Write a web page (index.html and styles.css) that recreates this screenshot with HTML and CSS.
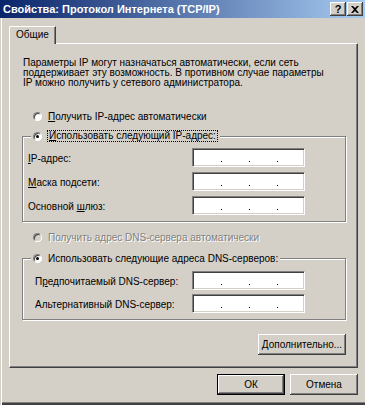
FILE: index.html
```html
<!DOCTYPE html>
<html lang="ru">
<head>
    <meta charset="UTF-8">
    <title>Свойства: Протокол Интернета (TCP/IP)</title>
    <link rel="stylesheet" href="styles.css">
</head>
<body>
    <div class="window">
        <!-- Title bar -->
        <div class="titlebar">
            <span class="title">Свойства: Протокол Интернета (TCP/IP)</span>
            <div class="caption-buttons">
                <span class="cap">?</span>
                <span class="cap">
                    <svg width="8" height="7" viewBox="0 0 8 7"><path d="M0 0h2l2 2 2-2h2L5 3.5 8 7H6L4 5 2 7H0l3-3.5z" fill="#000"/></svg>
                </span>
            </div>
        </div>

        <div class="client">
            <div class="tab-strip">
                <div class="tab">Общие</div>
            </div>

            <div class="panel">
                <p class="intro">Параметры IP могут назначаться автоматически, если сеть поддерживает эту возможность. В противном случае параметры IP можно получить у сетевого администратора.</p>

                <div class="radio radio-top">
                    <span class="radio-box"></span>
                    <span class="radio-text"><u>П</u>олучить IP-адрес автоматически</span>
                </div>

                <div class="group group-ip">
                    <div class="group-head">
                        <div class="radio">
                            <span class="radio-box checked"></span>
                            <span class="radio-text focus"><u>И</u>спользовать следующий IP-адрес:</span>
                        </div>
                    </div>
                    <div class="fields fields-ip">
                        <div class="field">
                            <span class="field-label"><u>I</u>P-адрес:</span>
                            <div class="ip"><i></i><i></i><i></i></div>
                        </div>
                        <div class="field">
                            <span class="field-label"><u>М</u>аска подсети:</span>
                            <div class="ip"><i></i><i></i><i></i></div>
                        </div>
                        <div class="field">
                            <span class="field-label">Основной <u>ш</u>люз:</span>
                            <div class="ip"><i></i><i></i><i></i></div>
                        </div>
                    </div>
                </div>

                <div class="radio radio-dns disabled">
                    <span class="radio-box"></span>
                    <span class="radio-text">Получить адрес DNS-сервера автоматически</span>
                </div>

                <div class="group group-dns">
                    <div class="group-head">
                        <div class="radio">
                            <span class="radio-box checked"></span>
                            <span class="radio-text">Использовать следующие адреса DNS-серверов:</span>
                        </div>
                    </div>
                    <div class="fields fields-dns">
                        <div class="field">
                            <span class="field-label">П<u>р</u>едпочитаемый DNS-сервер:</span>
                            <div class="ip"><i></i><i></i><i></i></div>
                        </div>
                        <div class="field">
                            <span class="field-label">Альтернативный DNS-сервер:</span>
                            <div class="ip"><i></i><i></i><i></i></div>
                        </div>
                    </div>
                </div>

                <div class="advanced-row">
                    <button class="btn btn-advanced"><u>Д</u>ополнительно...</button>
                </div>
            </div>

            <div class="dialog-buttons">
                <button class="btn default">ОК</button>
                <button class="btn">Отмена</button>
            </div>
        </div>
    </div>
</body>
</html>
```

FILE: styles.css
```css
/* General */
body {
    margin: 0;
    font-family: "Liberation Sans", Arial, sans-serif;
    font-size: 10px;
    color: #000;
    background-color: #d4d0c8;
}

.window {
    width: 365px;
    height: 405px;
    box-sizing: border-box;
    background-color: #d4d0c8;
    box-shadow: inset 1px 0 0 #d4d0c8, inset 2px 0 0 #fff,
                inset 0 -2px 0 #404040, inset 0 -3px 0 #808080;
}

/* Title bar */
.titlebar {
    height: 18px;
    display: flex;
    align-items: center;
    justify-content: space-between;
    padding: 0 2px 0 3px;
    background: linear-gradient(to right, #0a246a, #a6caf0);
    color: #fff;
    font-weight: bold;
    font-size: 11px;
}

.caption-buttons {
    display: flex;
    gap: 1px;
}

.cap {
    width: 16px;
    height: 14px;
    box-sizing: border-box;
    display: flex;
    align-items: center;
    justify-content: center;
    background-color: #d4d0c8;
    color: #000;
    font-size: 11px;
    font-weight: bold;
    box-shadow: inset -1px -1px 0 #404040, inset 1px 1px 0 #fff, inset -2px -2px 0 #808080;
}

/* Client area */
.client {
    padding: 8px 7px 0 9px;
}

.tab-strip {
    display: flex;
}

.tab {
    position: relative;
    z-index: 1;
    width: 47px;
    height: 18px;
    box-sizing: border-box;
    margin-bottom: -1px;
    background-color: #d4d0c8;
    border-top: 1px solid #fff;
    border-left: 1px solid #fff;
    border-right: 1px solid #404040;
    border-top-left-radius: 2px;
    box-shadow: inset -1px 0 0 #808080;
    text-align: center;
    line-height: 16px;
}

.panel {
    height: 325px;
    box-sizing: border-box;
    border-top: 1px solid #fff;
    border-left: 1px solid #fff;
    border-right: 1px solid #404040;
    border-bottom: 1px solid #404040;
    box-shadow: inset -1px -1px 0 #808080;
    padding: 14px 11px 0 12px;
}

.intro {
    max-width: 305px;
    margin: 0 0 0 1px;
    line-height: 10px;
}

/* Radio buttons */
.radio {
    display: flex;
    align-items: center;
    height: 12px;
    white-space: nowrap;
}

.radio-top {
    margin: 22px 0 0 11px;
}

.radio-dns {
    margin: 9px 0 0 11px;
}

.radio-box {
    width: 9px;
    height: 9px;
    box-sizing: border-box;
    border-radius: 50%;
    background-color: #fff;
    border: 1px solid;
    border-color: #808080 #fff #fff #808080;
    box-shadow: inset 1px 1px 0 #404040;
    display: flex;
    align-items: center;
    justify-content: center;
}

.radio-box.checked::after {
    content: "";
    width: 3px;
    height: 3px;
    border-radius: 50%;
    background-color: #000;
}

.radio-text {
    margin-left: 6px;
}

.radio-text.focus {
    margin-left: 5px;
    padding: 0 1px;
    border: 1px dotted #000;
    line-height: 10px;
}

.disabled .radio-text {
    color: #808080;
    text-shadow: 1px 1px 0 #fff;
}

.disabled .radio-box {
    background-color: #d4d0c8;
}

/* Group boxes */
.group {
    border: 1px solid #808080;
    box-shadow: inset 1px 1px 0 #fff, 1px 1px 0 #fff;
    padding-bottom: 6px;
}

.group-ip {
    margin-top: 14px;
}

.group-dns {
    margin-top: 15px;
}

.group-head {
    width: fit-content;
    margin: -7px 0 0 8px;
    padding: 0 2px;
    background-color: #d4d0c8;
}

.fields {
    display: flex;
    flex-direction: column;
}

.fields-ip {
    margin-top: 6px;
    gap: 5px;
    padding-left: 5px;
}

.fields-dns {
    margin-top: 7px;
    gap: 4px;
    padding-left: 12px;
}

.field {
    display: flex;
    align-items: center;
    height: 19px;
}

.field-label {
    flex: 1;
    padding-top: 2px;
    white-space: nowrap;
}

.ip {
    width: 113px;
    height: 19px;
    box-sizing: border-box;
    margin-right: 40px;
    background-color: #fff;
    border: 1px solid;
    border-color: #808080 #fff #fff #808080;
    box-shadow: inset 1px 1px 0 #404040, inset -1px -1px 0 #d4d0c8;
    display: flex;
    align-items: flex-end;
    gap: 27px;
    padding: 0 0 4px 28px;
}

.ip i {
    width: 1px;
    height: 1px;
    background-color: #000;
}

/* Buttons */
.btn {
    width: 68px;
    height: 21px;
    box-sizing: border-box;
    padding: 0;
    border: none;
    background-color: #d4d0c8;
    color: #000;
    font-family: "Liberation Sans", Arial, sans-serif;
    font-size: 10px;
    box-shadow: inset -1px -1px 0 #404040, inset 1px 1px 0 #fff, inset -2px -2px 0 #808080;
}

.btn.default {
    border: 1px solid #000;
}

.advanced-row {
    display: flex;
    justify-content: flex-end;
    margin-top: 14px;
}

.btn-advanced {
    width: 88px;
}

.dialog-buttons {
    display: flex;
    justify-content: flex-end;
    gap: 5px;
    margin-top: 6px;
}
```
